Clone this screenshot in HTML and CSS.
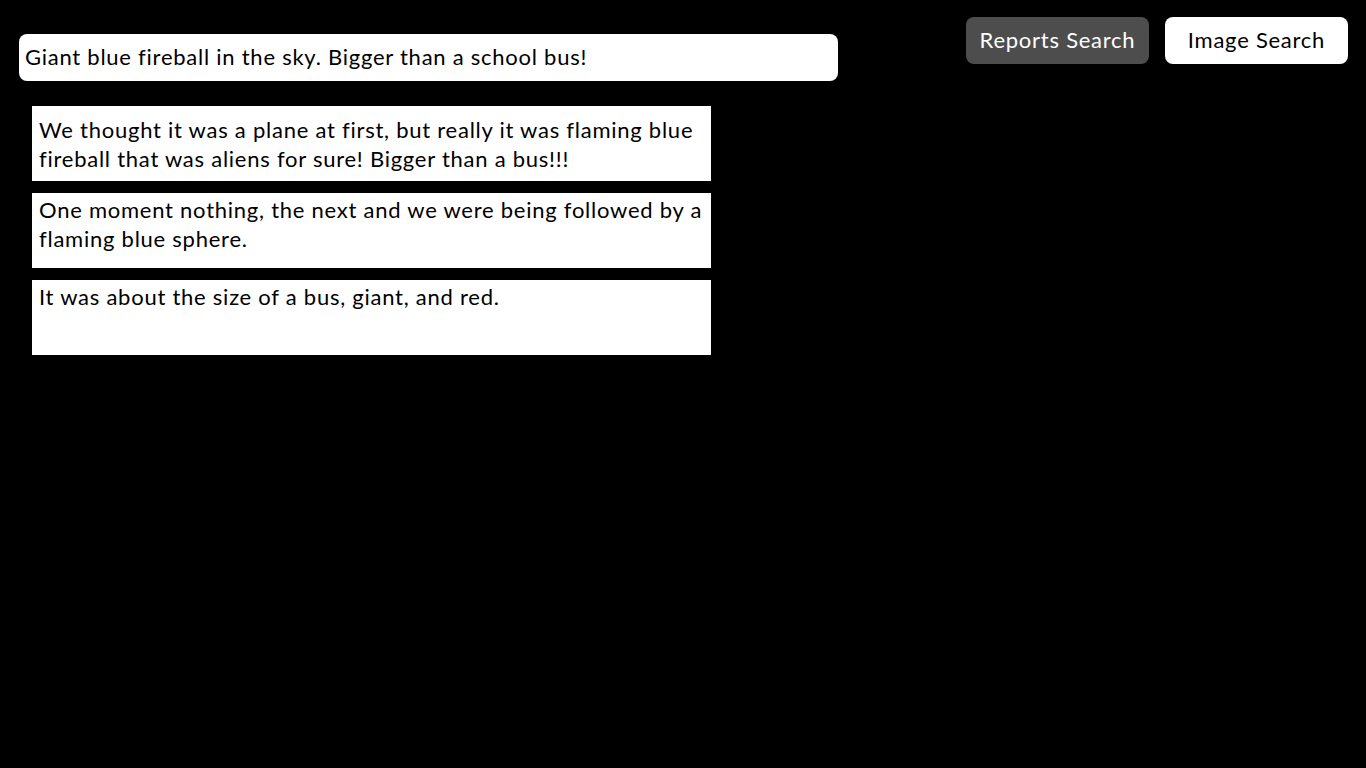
FILE: index.html
```html
<!DOCTYPE html>
<html lang="en">
<head>
<meta charset="utf-8">
<title>Reports Search</title>
<link rel="stylesheet" href="styles.css">
</head>
<body>
<div class="page">
  <main class="main">
    <div class="search">Giant blue fireball in the sky. Bigger than a school bus!</div>
    <div class="results">
      <div class="card">We thought it was a plane at first, but really it was flaming blue fireball that was aliens for sure! Bigger than a bus!!!</div>
      <div class="card">One moment nothing, the next and we were being followed by a flaming blue sphere.</div>
      <div class="card">It was about the size of a bus, giant, and red.</div>
    </div>
  </main>
  <nav class="nav">
    <button class="btn btn-active">Reports Search</button>
    <button class="btn">Image Search</button>
  </nav>
</div>
</body>
</html>
```
FILE: styles.css
```css
html, body {
  margin: 0;
  background: #000;
  font-family: "Lato", "Noto Sans", sans-serif;
  font-weight: 400;
  letter-spacing: 0.75px;
  color: #000;
}
.page {
  display: flex;
  justify-content: space-between;
  align-items: flex-start;
  padding: 17px 18px 0 19px;
}
.main {
  padding-top: 17px;
  width: 819px;
}
.search {
  box-sizing: border-box;
  height: 47px;
  background: #fff;
  border-radius: 8px;
  padding: 0 6px 2px;
  display: flex;
  align-items: center;
  font-size: 22px;
}
.results {
  margin: 25px 0 0 13px;
  width: 679px;
  display: flex;
  flex-direction: column;
  gap: 12px;
}
.card {
  box-sizing: border-box;
  height: 75px;
  background: #fff;
  padding: 2px 7px 0;
  font-size: 22px;
  line-height: 29px;
}
.card:first-child {
  padding-top: 9px;
}
.nav {
  display: flex;
  gap: 16px;
}
.btn {
  width: 183px;
  height: 47px;
  border: none;
  border-radius: 8px;
  background: #fff;
  color: #000;
  font-family: inherit;
  font-weight: 400;
  letter-spacing: 0.75px;
  font-size: 22px;
  padding: 0 0 3px;
}
.btn-active {
  background: #4d4d4d;
  color: #fff;
}
```
